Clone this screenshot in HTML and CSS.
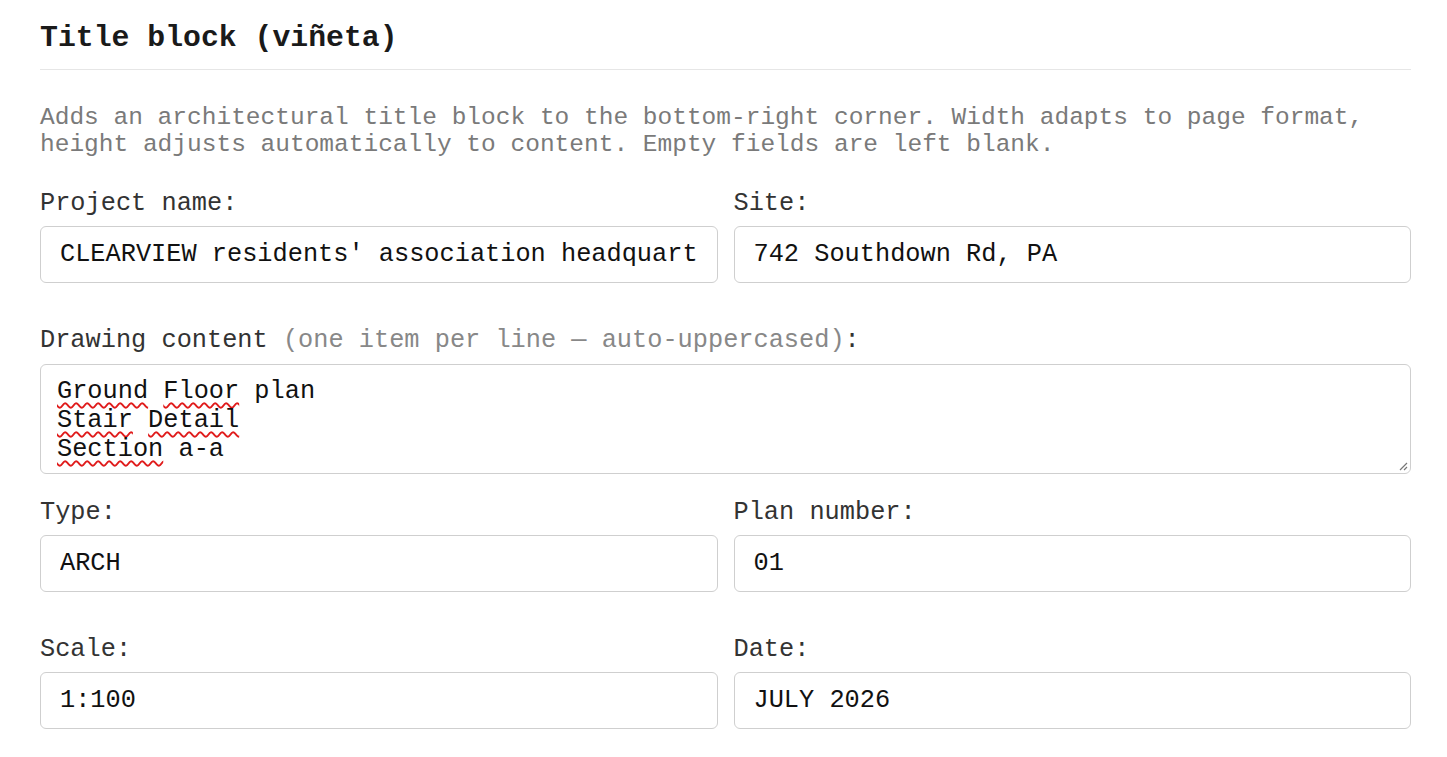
FILE: index.html
```html
<!DOCTYPE html>
<html lang="en">
<head>
<meta charset="utf-8">
<title>Title block</title>
<link rel="stylesheet" href="styles.css">
</head>
<body>
<div class="panel">
  <h2 class="title">Title block (viñeta)</h2>
  <p class="desc">Adds an architectural title block to the bottom-right corner. Width adapts to page format, height adjusts automatically to content. Empty fields are left blank.</p>

  <div class="row">
    <div class="field">
      <label class="label">Project name:</label>
      <input class="input" type="text" value="CLEARVIEW residents' association headquarters">
    </div>
    <div class="field">
      <label class="label">Site:</label>
      <input class="input" type="text" value="742 Southdown Rd, PA">
    </div>
  </div>

  <div class="field wide">
    <label class="label">Drawing content <span class="hint">(one item per line — auto-uppercased)</span>:</label>
    <div class="textarea">
      <div class="line"><span class="sp">Ground</span> <span class="sp">Floor</span> plan</div>
      <div class="line"><span class="sp">Stair</span> <span class="sp">Detail</span></div>
      <div class="line"><span class="sp">Section</span> a-a</div>
      <svg class="grip" width="9" height="9" viewBox="0 0 9 9"><path d="M8 1L1 8M8 5L5 8" stroke="#777" stroke-width="1.2" fill="none"/></svg>
    </div>
  </div>

  <div class="row">
    <div class="field">
      <label class="label">Type:</label>
      <input class="input" type="text" value="ARCH">
    </div>
    <div class="field">
      <label class="label">Plan number:</label>
      <input class="input" type="text" value="01">
    </div>
  </div>

  <div class="row">
    <div class="field">
      <label class="label">Scale:</label>
      <input class="input" type="text" value="1:100">
    </div>
    <div class="field">
      <label class="label">Date:</label>
      <input class="input" type="text" value="JULY 2026">
    </div>
  </div>
</div>
</body>
</html>
```

FILE: styles.css
```css
html, body {
  margin: 0;
  padding: 0;
  background: #ffffff;
}

body {
  font-family: "Liberation Mono", "Courier New", monospace;
  color: #222;
}

.panel {
  padding: 21px 36px 0 40px;
}

.title {
  margin: 0;
  font-size: 29.8px;
  font-weight: bold;
  line-height: 34px;
  color: #1a1a1a;
  padding-bottom: 14px;
  border-bottom: 1px solid #e6e6e6;
}

.desc {
  margin: 34px 0 31px 0;
  font-size: 24.5px;
  line-height: 27px;
  color: #7a7a7a;
}

.row {
  display: grid;
  grid-template-columns: 1fr 1fr;
  column-gap: 16px;
}

.field {
  display: flex;
  flex-direction: column;
  gap: 7px;
  margin-bottom: 23px;
  min-width: 0;
}

.field.wide {
  gap: 8px;
  margin-bottom: 24px;
}

.label {
  font-size: 25.3px;
  line-height: 30px;
  color: #333;
}

.hint {
  color: #888;
}

.input {
  box-sizing: border-box;
  width: 100%;
  height: 57px;
  margin: 0 0 20px 0;
  padding: 0 19px;
  border: 1px solid #cfcfcf;
  border-radius: 6px;
  font-family: "Liberation Mono", "Courier New", monospace;
  font-size: 25.3px;
  color: #111;
  background: #fff;
  outline: none;
}

.textarea {
  position: relative;
  box-sizing: border-box;
  height: 110px;
  padding: 12px 16px 8px 16px;
  border: 1px solid #cfcfcf;
  border-radius: 6px;
  font-size: 25.3px;
  line-height: 29px;
  color: #111;
  background: #fff;
}

.sp {
  text-decoration: underline wavy #e01b1b;
  text-decoration-thickness: 2px;
  text-underline-offset: 4px;
  text-decoration-skip-ink: none;
}

.grip {
  position: absolute;
  right: 2px;
  bottom: 2px;
}
```
